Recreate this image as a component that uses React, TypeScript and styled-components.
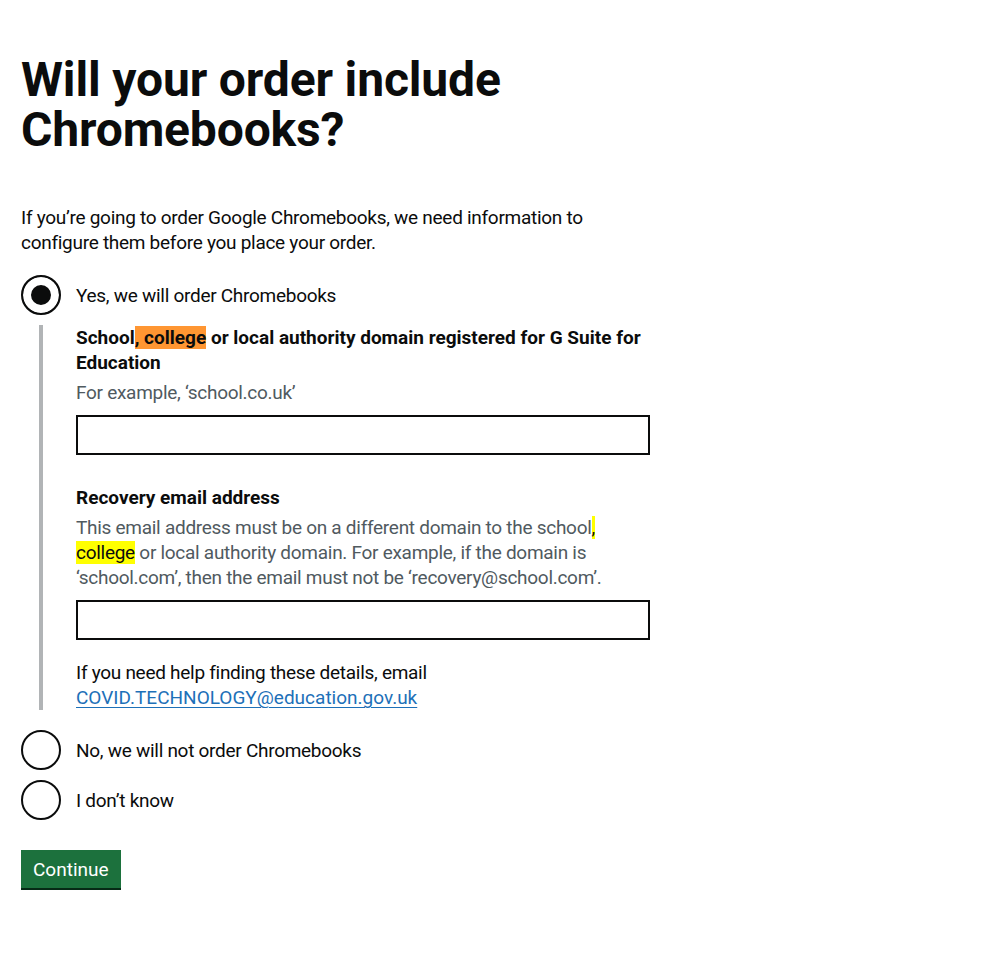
import React from "react";
import styled, { createGlobalStyle } from "styled-components";

const GlobalStyle = createGlobalStyle`
  html, body { margin: 0; padding: 0; background: #ffffff; }
  body {
    font-family: Roboto, "Liberation Sans", Arial, sans-serif;
    color: #0b0c0c;
    -webkit-font-smoothing: antialiased;
  }
  *, *::before, *::after { box-sizing: border-box; }
`;

const Page = styled.main`
  padding: 55px 21px 40px;
`;

const Column = styled.div`
  max-width: 629px;
`;

const Heading = styled.h1`
  margin: 0 0 50px;
  font-size: 48px;
  line-height: 50px;
  font-weight: 700;
  letter-spacing: -0.15px;
`;

const Fieldset = styled.fieldset`
  margin: 0 0 20px;
  padding: 0;
  border: 0;
  min-width: 0;
`;

const Body = styled.p<{ $tone?: "text" | "hint" }>`
  margin: 0;
  font-size: 19px;
  line-height: 25px;
  font-weight: 400;
  letter-spacing: -0.28px;
  color: ${(p) => (p.$tone === "hint" ? "#505a5f" : "#0b0c0c")};
`;

const Intro = styled(Body)`
  margin-bottom: 20px;
`;

const RadioItem = styled.div`
  display: flex;
  align-items: flex-start;
  min-height: 40px;
  margin-bottom: 10px;
`;

const RadioInput = styled.input`
  appearance: none;
  -webkit-appearance: none;
  flex: 0 0 40px;
  width: 40px;
  height: 40px;
  margin: 0;
  border: 2px solid #0b0c0c;
  border-radius: 50%;
  background: #ffffff;
  &:checked {
    background: #0b0c0c;
    box-shadow: inset 0 0 0 8px #ffffff;
  }
`;

const RadioLabel = styled.label`
  padding: 8px 15px 5px;
  font-size: 19px;
  line-height: 25px;
  letter-spacing: -0.28px;
`;

const Conditional = styled.div`
  margin: 0 0 20px 18px;
  padding-left: 33px;
  border-left: 4px solid #b1b4b6;
`;

const FormGroup = styled.div<{ $gap: number }>`
  margin-bottom: ${(p) => p.$gap}px;
`;

const FieldLabel = styled.label`
  display: block;
  margin-bottom: 5px;
  font-size: 19px;
  line-height: 25px;
  font-weight: 700;
`;

const Hint = styled(Body)`
  margin-bottom: 10px;
`;

const TextInput = styled.input`
  display: block;
  width: 100%;
  height: 40px;
  margin: 0;
  padding: 5px;
  border: 2px solid #0b0c0c;
  border-radius: 0;
  font-family: inherit;
  font-size: 19px;
  background: #ffffff;
  outline: none;
`;

const Mark = styled.mark<{ $tone: "active" | "match" }>`
  background: ${(p) => (p.$tone === "active" ? "#ff9632" : "#ffff00")};
  color: #0b0c0c;
`;

const Link = styled.a`
  color: #1d70b8;
  letter-spacing: 0;
  text-decoration: underline;
  text-decoration-thickness: 1px;
  text-underline-offset: 3px;
`;

const Button = styled.button`
  display: inline-block;
  margin: 0;
  padding: 8px 10px 7px;
  border: 2px solid transparent;
  border-radius: 0;
  background: #1c713d;
  color: #ffffff;
  font-family: inherit;
  font-size: 19px;
  line-height: 19px;
  font-weight: 400;
  letter-spacing: 0;
  box-shadow: 0 2px 0 #062a16;
  cursor: pointer;
`;

export default function App() {
  return (
    <>
      <GlobalStyle />
      <Page>
        <Column>
          <form onSubmit={(e) => e.preventDefault()}>
            <Fieldset>
              <Heading>Will your order include Chromebooks?</Heading>
              <Intro>
                If you’re going to order Google Chromebooks, we need information to configure them before you
                place your order.
              </Intro>

              <RadioItem>
                <RadioInput type="radio" id="yes" name="order" defaultChecked />
                <RadioLabel htmlFor="yes">Yes, we will order Chromebooks</RadioLabel>
              </RadioItem>

              <Conditional>
                <FormGroup $gap={30}>
                  <FieldLabel htmlFor="domain">
                    School<Mark $tone="active">, college</Mark> or local authority domain registered for G Suite
                    for Education
                  </FieldLabel>
                  <Hint $tone="hint">For example, ‘school.co.uk’</Hint>
                  <TextInput id="domain" type="text" />
                </FormGroup>

                <FormGroup $gap={20}>
                  <FieldLabel htmlFor="recovery">Recovery email address</FieldLabel>
                  <Hint $tone="hint">
                    This email address must be on a different domain to the school<Mark $tone="match">,</Mark>{" "}
                    <Mark $tone="match">college</Mark> or local authority domain. For example, if the domain is
                    ‘school.com’, then the email must not be ‘recovery@school.com’.
                  </Hint>
                  <TextInput id="recovery" type="email" />
                </FormGroup>

                <Body>
                  If you need help finding these details, email{" "}
                  <Link href="#">COVID.TECHNOLOGY@education.gov.uk</Link>
                </Body>
              </Conditional>

              <RadioItem>
                <RadioInput type="radio" id="no" name="order" />
                <RadioLabel htmlFor="no">No, we will not order Chromebooks</RadioLabel>
              </RadioItem>

              <RadioItem>
                <RadioInput type="radio" id="dontknow" name="order" />
                <RadioLabel htmlFor="dontknow">I don’t know</RadioLabel>
              </RadioItem>
            </Fieldset>

            <Button type="submit">Continue</Button>
          </form>
        </Column>
      </Page>
    </>
  );
}
